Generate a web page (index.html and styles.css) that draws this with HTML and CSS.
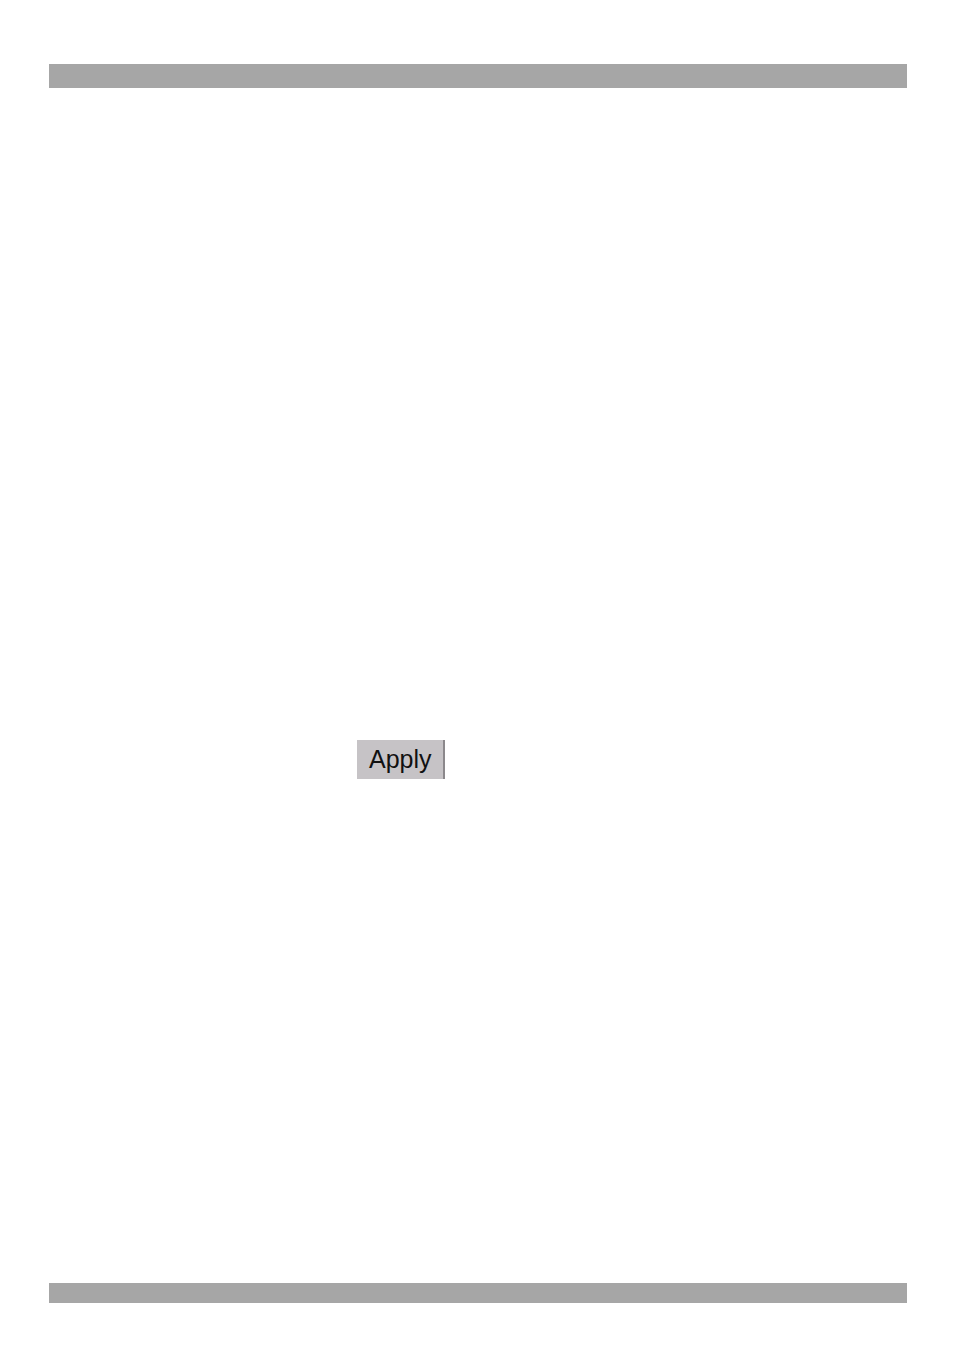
FILE: index.html
```html
<!DOCTYPE html>
<html lang="en">
<head>
<meta charset="utf-8">
<title>Apply</title>
<link rel="stylesheet" href="styles.css">
</head>
<body>
<div class="page">
<header class="bar bar-top"></header>
<main class="content">
<button class="apply" type="button">Apply</button>
</main>
<footer class="bar bar-bottom"></footer>
</div>
</body>
</html>
```
FILE: styles.css
```css
body {
  margin: 0;
  background: #fff;
}

.page {
  box-sizing: border-box;
  min-height: 100vh;
  display: flex;
  flex-direction: column;
  padding: 64px 47px 52px 49px;
}

.bar {
  background: #a6a6a6;
}

.bar-top {
  height: 24px;
}

.bar-bottom {
  height: 20px;
}

.content {
  flex: 1;
  padding: 652px 0 0 308px;
}

.apply {
  display: block;
  height: 39px;
  padding: 0 11px 0 12px;
  border: 0;
  border-right: 2px solid #8b888b;
  border-radius: 0;
  background: #c6c3c6;
  color: #111;
  font: 25px/39px "Liberation Sans", Arial, sans-serif;
}
```
